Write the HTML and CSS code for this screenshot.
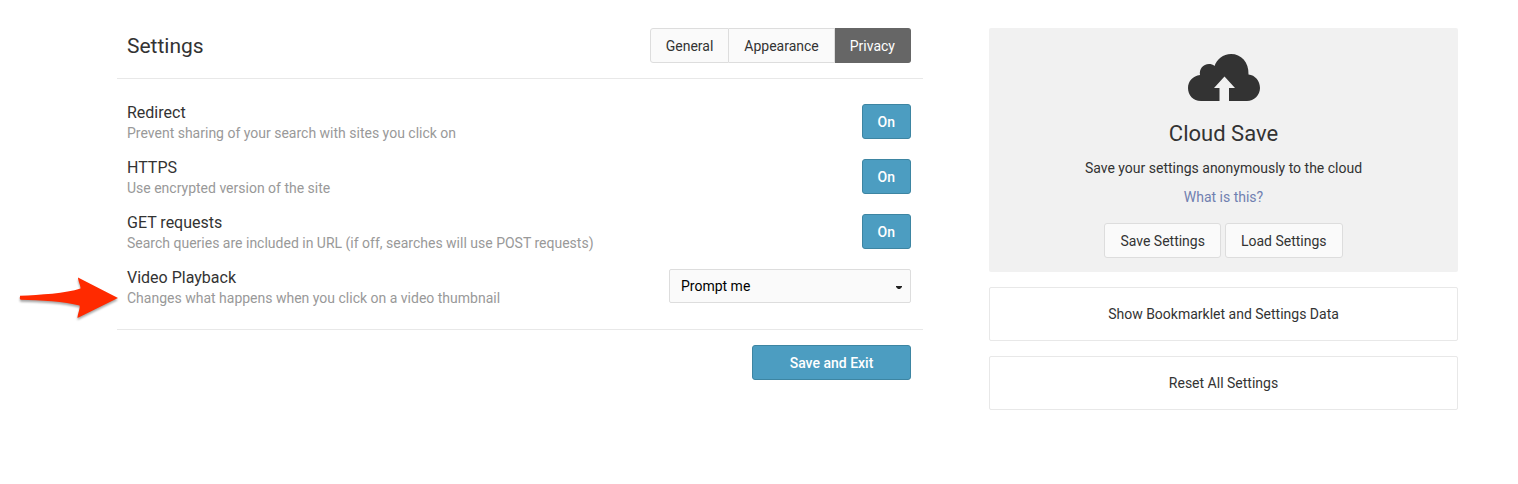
FILE: index.html
```html
<!DOCTYPE html>
<html lang="en">
<head>
<meta charset="utf-8">
<title>Settings</title>
<link rel="stylesheet" href="styles.css">
</head>
<body>
<div class="page">
  <main class="settings">
    <header class="settings-header">
      <h1 class="title">Settings</h1>
      <nav class="tabs">
        <button class="tab" type="button">General</button>
        <button class="tab" type="button">Appearance</button>
        <button class="tab tab-active" type="button" aria-current="page">Privacy</button>
      </nav>
    </header>
    <div class="rows">
      <div class="row">
        <div class="row-text">
          <h2 class="row-title" id="redirect">Redirect</h2>
          <p class="row-desc">Prevent sharing of your search with sites you click on</p>
        </div>
        <button class="btn btn-primary" type="button" aria-pressed="true" aria-describedby="redirect">On</button>
      </div>
      <div class="row">
        <div class="row-text">
          <h2 class="row-title" id="https">HTTPS</h2>
          <p class="row-desc">Use encrypted version of the site</p>
        </div>
        <button class="btn btn-primary" type="button" aria-pressed="true" aria-describedby="https">On</button>
      </div>
      <div class="row">
        <div class="row-text">
          <h2 class="row-title" id="get">GET requests</h2>
          <p class="row-desc">Search queries are included in URL (if off, searches will use POST requests)</p>
        </div>
        <button class="btn btn-primary" type="button" aria-pressed="true" aria-describedby="get">On</button>
      </div>
      <div class="row">
        <svg class="pointer" viewBox="0 0 104 50" aria-hidden="true">
          <path d="M4 20.500Q3.200 22.500 4.500 23.700C24 24 49 25.500 63.500 29.500C64.500 32 61.500 38 61.500 42L102 22L62 1.500C62 5 65 10.500 64.500 12.500C50 17.500 24 18.800 4 19.800Z" fill="#ff2a00"/>
        </svg>
        <div class="row-text">
          <label class="row-title" for="video">Video Playback</label>
          <p class="row-desc">Changes what happens when you click on a video thumbnail</p>
        </div>
        <div class="select-wrap">
          <select class="select" id="video"><option>Prompt me</option></select>
          <svg class="caret" viewBox="0 0 6 3" aria-hidden="true"><path d="M0 0h6v1L4 3H2L0 1z" fill="#222"/></svg>
        </div>
      </div>
    </div>
    <footer class="settings-footer">
      <button class="btn btn-primary btn-save" type="button">Save and Exit</button>
    </footer>
  </main>
  <aside class="side">
    <section class="cloud">
      <svg class="cloud-icon" viewBox="0 0 72 47" aria-hidden="true">
        <path fill="#333" d="M13 47C5 47 0 41 0 34C0 27 5 22 12 21C11 15 15 10 21 10C23 10 25 10.500 26.500 12C29 5 35 0 43 0C53 0 61 8 60.500 20.500C67 21 72 27 72 34C72 41 66 47 59 47H41V34H47L36.500 22.500L26 34H31.500V47Z"/>
      </svg>
      <h2 class="cloud-title">Cloud Save</h2>
      <p class="cloud-text">Save your settings anonymously to the cloud</p>
      <a class="cloud-link" href="#">What is this?</a>
      <div class="cloud-actions">
        <button class="btn" type="button">Save Settings</button>
        <button class="btn" type="button">Load Settings</button>
      </div>
    </section>
    <button class="side-btn" type="button">Show Bookmarklet and Settings Data</button>
    <button class="side-btn" type="button">Reset All Settings</button>
  </aside>
</div>
</body>
</html>
```
FILE: styles.css
```css
* {
  box-sizing: border-box;
}

body {
  margin: 0;
  background: #fff;
  color: #333;
  font: 14px/20px Roboto, "Liberation Sans", sans-serif;
}

h1, h2, p {
  margin: 0;
  font-weight: 400;
}

button, select {
  font: inherit;
  color: inherit;
  cursor: pointer;
}

.page {
  display: grid;
  grid-template-columns: 806fr 469fr;
  gap: 66px;
  padding: 28px 60px 28px 117px;
}

.settings-header {
  display: flex;
  justify-content: space-between;
  align-items: center;
  padding: 0 12px 15px 10px;
  border-bottom: 1px solid #e8e8e8;
}

.title {
  font-size: 21px;
  line-height: 28px;
}

.tabs {
  display: flex;
}

.tab, .btn {
  height: 35px;
  padding: 0 15px;
  border: 1px solid #ddd;
  background: #fafafa;
}

.tab + .tab {
  border-left: 0;
}

.tab:first-child {
  border-radius: 3px 0 0 3px;
}

.tab-active {
  border-color: #666;
  border-radius: 0 3px 3px 0;
  background: #666;
  color: #fff;
}

.btn {
  border-radius: 3px;
}

.btn-primary {
  border-color: #3d85a2;
  background: #4c9dc1;
  color: #fff;
  font-weight: 500;
}

.rows {
  display: grid;
  gap: 15px;
  padding: 25px 12px 20px 10px;
  border-bottom: 1px solid #e8e8e8;
}

.row {
  position: relative;
  display: flex;
  justify-content: space-between;
  align-items: flex-start;
}

.row-title {
  display: block;
  font-size: 16px;
  line-height: 18px;
}

.row-desc {
  color: #999;
  line-height: 22px;
}

.pointer {
  position: absolute;
  left: -111px;
  top: 7px;
  width: 104px;
  height: 50px;
  filter: drop-shadow(0 2px 1px rgba(0, 0, 0, 0.35));
}

.select-wrap {
  position: relative;
  width: 242px;
}

.select {
  display: block;
  width: 100%;
  height: 34px;
  padding: 0 24px 0 11px;
  border: 1px solid #ddd;
  border-radius: 2px;
  background: #fafafa;
  color: #000;
  appearance: none;
}

.caret {
  position: absolute;
  right: 9px;
  top: 17px;
  width: 6px;
  height: 3px;
  pointer-events: none;
}

.settings-footer {
  display: flex;
  justify-content: flex-end;
  padding: 15px 12px 0;
}

.btn-save {
  width: 159px;
}

.side {
  display: flex;
  flex-direction: column;
  gap: 15px;
}

.cloud {
  display: flex;
  flex-direction: column;
  align-items: center;
  padding: 26px 14px 14px;
  border-radius: 2px;
  background: #f1f1f1;
}

.cloud-icon {
  width: 72px;
  height: 47px;
}

.cloud-title {
  padding-top: 19px;
  font-size: 22px;
  line-height: 28px;
}

.cloud-text {
  padding-top: 10px;
}

.cloud-link {
  padding-top: 9px;
  color: #7080b0;
  text-decoration: none;
}

.cloud-actions {
  display: flex;
  gap: 4px;
  padding-top: 16px;
}

.side-btn {
  height: 54px;
  border: 1px solid #e8e8e8;
  border-radius: 2px;
  background: #fff;
}
```
